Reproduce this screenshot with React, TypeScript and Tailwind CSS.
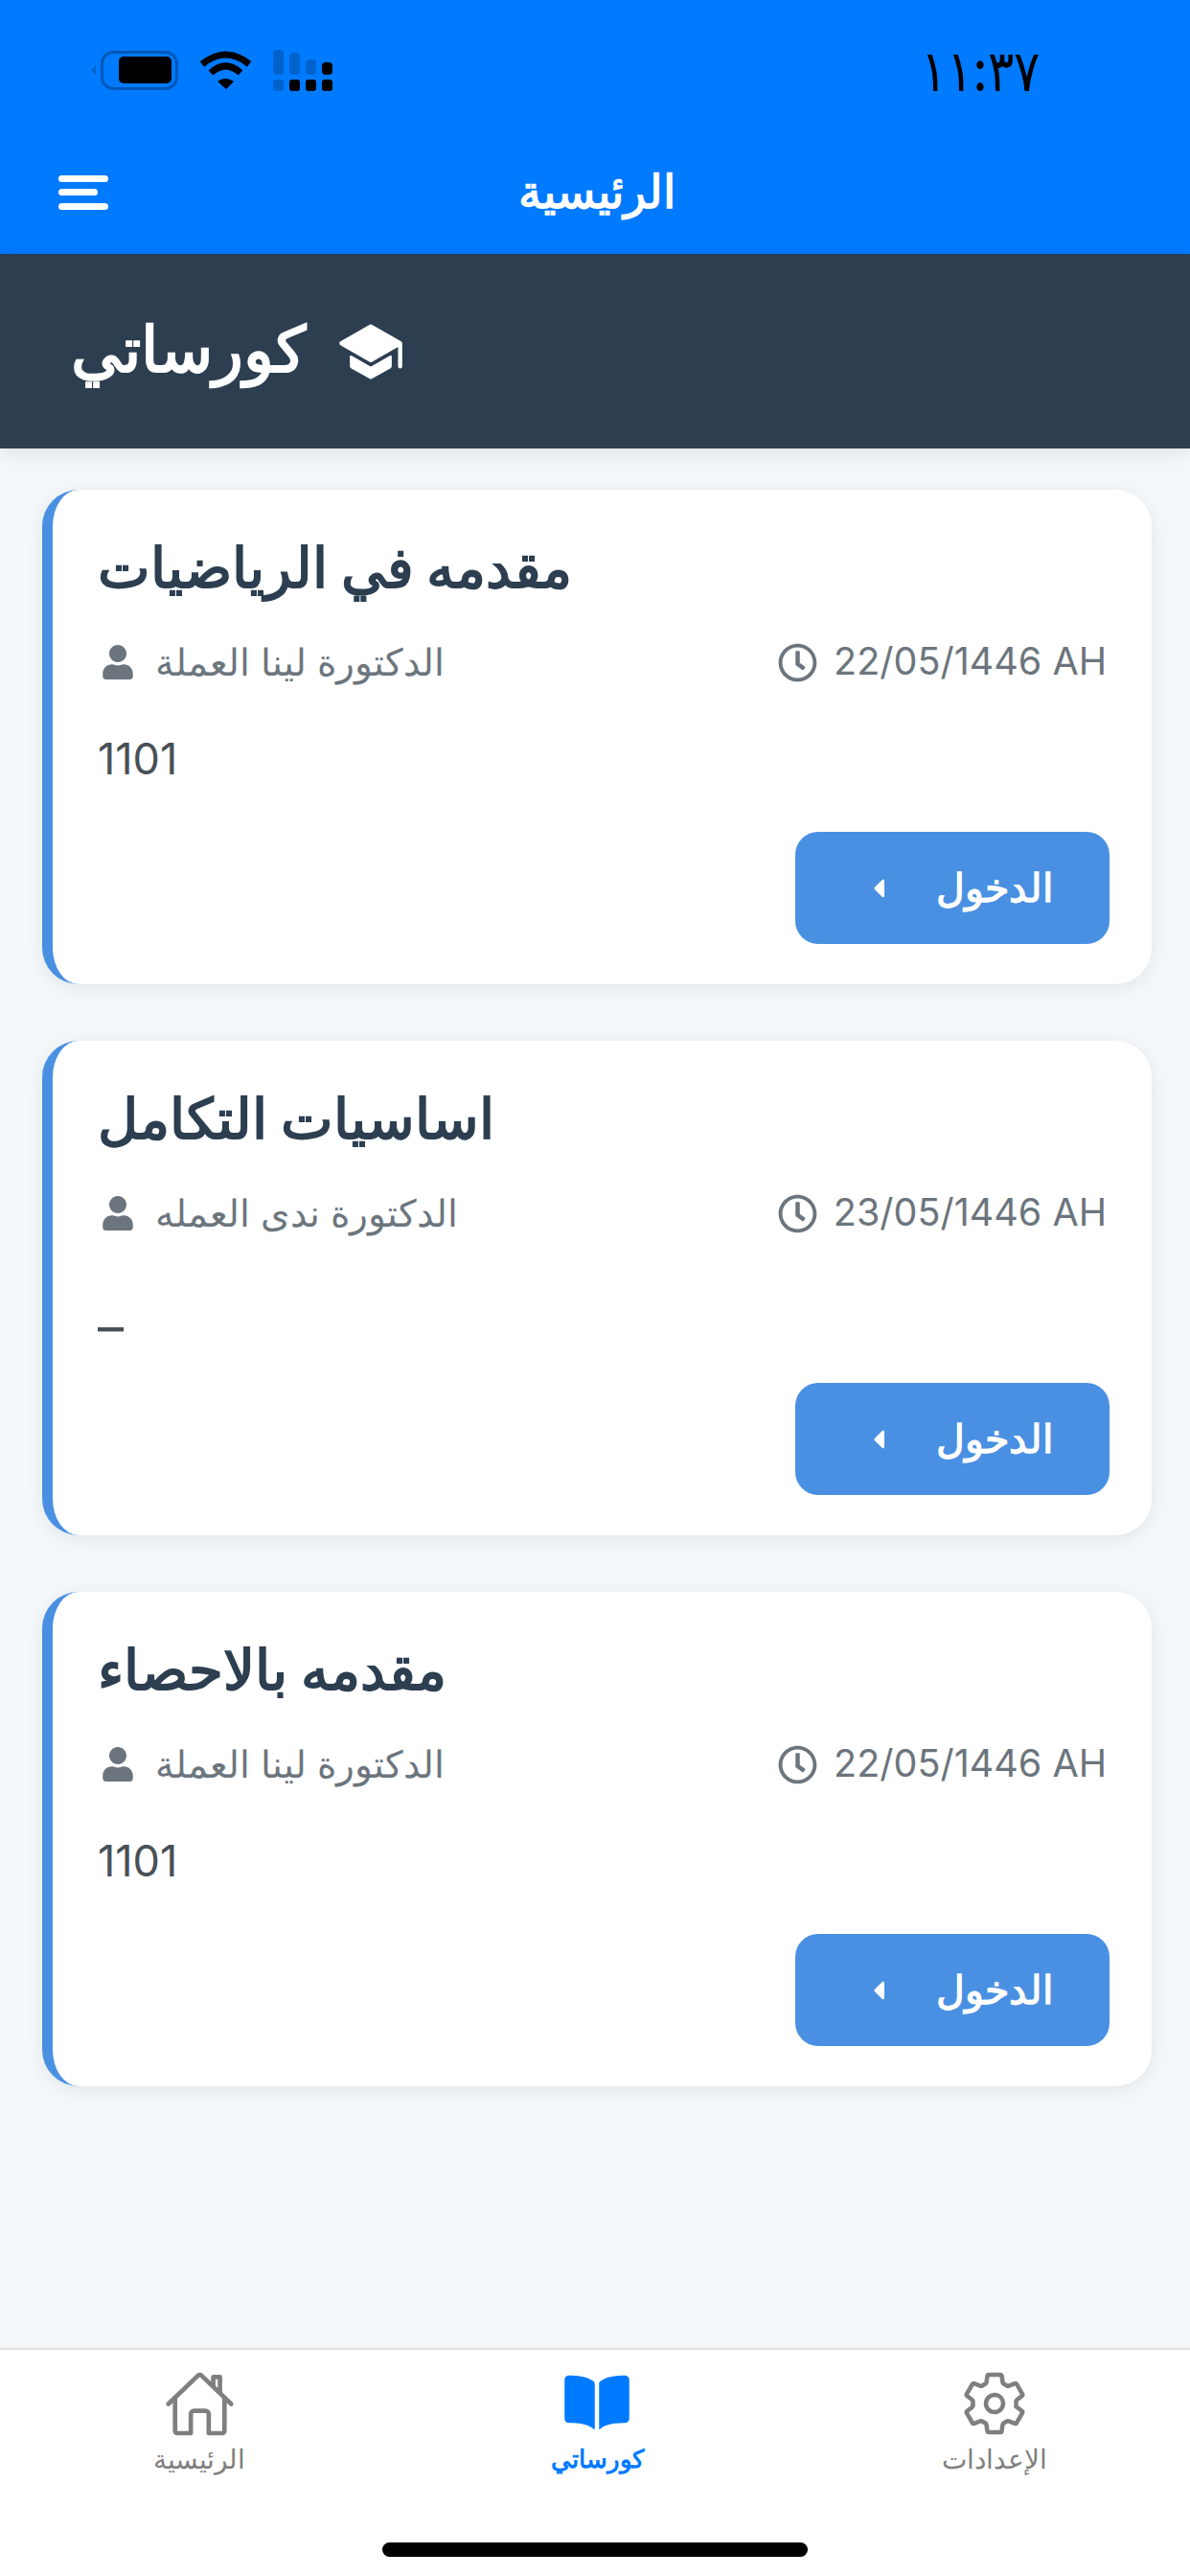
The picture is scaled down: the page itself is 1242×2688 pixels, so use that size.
import React from "react";
import { FaUser, FaRegClock, FaCaretLeft } from "react-icons/fa";
import { IoHomeOutline, IoBook, IoSettingsOutline, IoSchool } from "react-icons/io5";

const courses = [
  { title: "مقدمه في الرياضيات", doctor: "الدكتورة لينا العملة", date: "22/05/1446 AH", code: "1101" },
  { title: "اساسيات التكامل", doctor: "الدكتورة ندى العمله", date: "23/05/1446 AH", code: "–" },
  { title: "مقدمه بالاحصاء", doctor: "الدكتورة لينا العملة", date: "22/05/1446 AH", code: "1101" },
];

function StatusIcons() {
  return (
    <svg width="256" height="48" viewBox="0 0 256 48" className="block">
      <path d="M0 23l5-5v10z" fill="#0062cc" />
      <rect x="11.5" y="4.5" width="78" height="38" rx="12" fill="none" stroke="#0058b8" strokeWidth="3" />
      <rect x="29" y="9" width="55" height="28" rx="5" fill="#000" />
      <path d="M116 17 Q140.5 -3 165 17" fill="none" stroke="#000" strokeWidth="7" />
      <path d="M125 26 Q140.5 12 156 26" fill="none" stroke="#000" strokeWidth="7" />
      <path d="M132 35 Q140 29 149 35 L141 43z" fill="#000" />
      <rect x="190" y="2" width="11" height="26" rx="4" fill="#0062cc" />
      <rect x="207" y="5" width="11" height="23" rx="4" fill="#0062cc" />
      <rect x="224" y="12" width="11" height="16" rx="4" fill="#0062cc" />
      <rect x="241" y="15" width="11" height="13" rx="4" fill="#000" />
      <rect x="190" y="33" width="11" height="12" rx="3" fill="#0062cc" />
      <rect x="207" y="33" width="11" height="12" rx="3" fill="#000" />
      <rect x="224" y="33" width="11" height="12" rx="3" fill="#000" />
      <rect x="241" y="33" width="11" height="12" rx="3" fill="#000" />
    </svg>
  );
}

function Card({ c }: { c: (typeof courses)[number] }) {
  return (
    <div className="h-[516px] rounded-[38px] border-l-[11px] border-[#4a90e2] bg-white pl-[47px] pr-[44px] pt-[42px] shadow-[0_4px_20px_rgba(0,0,0,0.08)]">
      <div dir="rtl" className="h-[78px] text-left text-[58px] leading-[78px] font-bold text-[#2c3e50]">{c.title}</div>
      <div className="mt-[30px] flex h-[60px] items-center justify-between text-[39px] text-[#6c757d]">
        <div className="flex items-center gap-[21px]">
          <FaUser className="ml-[3px] h-[36px] w-[36px] shrink-0" />
          <span dir="rtl">{c.doctor}</span>
        </div>
        <div className="mr-[3px] flex items-center gap-[17px] text-[39.5px]">
          <FaRegClock className="h-[41px] w-[41px]" />
          <span>{c.date}</span>
        </div>
      </div>
      <div className="mt-[41px] h-[60px] text-[45px] leading-[60px] text-[#495057]">
        {c.code === "–" ? <span className="inline-block translate-y-[18px] text-[54px]">{c.code}</span> : c.code}
      </div>
      <div className="mt-[46px] flex justify-end">
        <div className="flex h-[117px] w-[328px] items-center justify-end gap-[44px] rounded-[24px] bg-[#4a90e2] pr-[59px] text-[41px] font-semibold text-white">
          <FaCaretLeft className="h-[32px] w-[32px]" />
          <span dir="rtl">الدخول</span>
        </div>
      </div>
    </div>
  );
}

function NavItem({ icon, label, active }: { icon: React.ReactNode; label: string; active?: boolean }) {
  return (
    <div className={"flex flex-col items-center " + (active ? "ml-[7px] text-[#007aff]" : "text-[#7f7f7f]")}>
      <div className="flex h-[76px] items-center justify-center">{icon}</div>
      <div dir="rtl" className={"mt-[-2px] leading-[44px] " + (active ? "text-[26px] font-bold" : "text-[28px]")}>{label}</div>
    </div>
  );
}

export default function App() {
  return (
    <div className="flex h-[2688px] w-[1242px] flex-col overflow-hidden bg-[#f5f8fa] font-['Inter','Noto_Sans',sans-serif]">
      <header className="h-[265px] shrink-0 bg-[#007aff] text-white">
        <div className="flex h-[170px] items-start justify-between pl-[95px] pr-[157px] pt-[50px]">
          <StatusIcons />
          <span className="inline-block origin-right scale-x-[0.85] text-[60px] leading-[46px] font-medium tracking-[-6px] text-black">١١:٣٧</span>
        </div>
        <div className="relative flex h-[70px] items-center justify-center">
          <svg width="54" height="36" viewBox="0 0 54 36" className="absolute left-[61px] top-[13px]">
            <rect x="0" y="0" width="52" height="7" rx="3.5" fill="#fff" />
            <rect x="0" y="14" width="41" height="7" rx="3.5" fill="#fff" />
            <rect x="0" y="29" width="52" height="7" rx="3.5" fill="#fff" />
          </svg>
          <span dir="rtl" className="mb-[10px] ml-[4px] text-[48px] font-semibold">الرئيسية</span>
        </div>
      </header>
      <div className="flex h-[203px] shrink-0 items-center gap-[33px] bg-[#2c3e50] pl-[74px] text-white shadow-[0_4px_20px_rgba(0,0,0,0.1)]">
        <span dir="rtl" className="mb-[4px] text-[66px] font-bold">كورساتي</span>
        <IoSchool className="h-[70px] w-[70px]" />
      </div>
      <main className="flex flex-1 flex-col gap-[59px] pl-[44px] pr-[40px] pt-[43px]">
        {courses.map((c, i) => <Card key={i} c={c} />)}
      </main>
      <nav className="h-[238px] shrink-0 border-t-2 border-[#e1e1e1] bg-white">
        <div className="flex h-[186px] items-start justify-between pl-[160px] pr-[149px] pt-[18px]">
          <NavItem icon={<IoHomeOutline className="h-[75px] w-[75px]" />} label="الرئيسية" />
          <NavItem active icon={<IoBook className="h-[72px] w-[72px]" />} label="كورساتي" />
          <NavItem icon={<IoSettingsOutline className="h-[72px] w-[72px]" />} label="الإعدادات" />
        </div>
        <div className="mx-auto mt-[15px] h-[15px] w-[444px] rounded-full bg-black" />
      </nav>
    </div>
  );
}
